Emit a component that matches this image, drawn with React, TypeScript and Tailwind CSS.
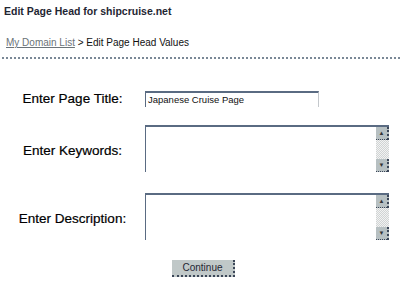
function Scrollbar() {
  return (
    <div className="flex w-[13px] flex-col self-stretch">
      <div className="flex h-[13px] items-center justify-center border-r-2 border-b border-dotted border-[#3b4658] bg-[#b7c0c2] text-[6px] leading-none text-[#333]">
        ▲
      </div>
      <div className="flex-1 bg-[repeating-conic-gradient(#d0d4d4_0_25%,#f2f2f2_0_50%)] bg-[length:2px_2px]" />
      <div className="flex h-[13px] items-center justify-center border-r-2 border-b border-dotted border-[#3b4658] bg-[#b7c0c2] text-[6px] leading-none text-[#333]">
        ▼
      </div>
    </div>
  );
}

function Field({ label, children, h, lift }: { label: string; children: React.ReactNode; h: string; lift?: boolean }) {
  return (
    <div className={`flex items-center ${h}`}>
      <div className={`w-[145px] text-center text-[13.5px] text-black [-webkit-text-stroke:0.2px_black] ${lift ? "pt-[5px]" : ""}`}>
        {label}
      </div>
      {children}
    </div>
  );
}

export default function App() {
  return (
    <div className="h-[286px] w-[400px] overflow-hidden bg-white font-['Liberation_Sans',Arial,sans-serif]">
      <div className="pl-[4px] pt-[4px] text-[10.5px] font-bold leading-[14px] text-[#1f2633]">
        Edit Page Head for shipcruise.net
      </div>
      <div className="pl-[6px] pt-[19px] text-[10px] leading-[12px] text-[#111]">
        <a className="text-[#6b7378] underline">My Domain List</a> &gt; Edit Page Head Values
      </div>
      <div className="mt-[8px] ml-[2px] border-t-2 border-dotted border-[#7a8896]" />

      <div className="mt-[32px] flex flex-col">
        <Field label="Enter Page Title:" h="h-[16px]">
          <div className="flex h-[16px] w-[174px] items-center border-t-2 border-l border-r border-[#5a6b82] border-r-[#c4c8cc] border-r-dotted pl-[2px] text-[9.5px] text-[#111]">
            Japanese Cruise Page
          </div>
        </Field>
        <div className="mt-[18px]">
          <Field label="Enter Keywords:" h="h-[47px]" lift>
            <div className="flex h-[47px] w-[244px] border-t-2 border-l border-[#5a6b82]">
              <div className="flex-1" />
              <Scrollbar />
            </div>
          </Field>
        </div>
        <div className="mt-[21px]">
          <Field label="Enter Description:" h="h-[47px]" lift>
            <div className="flex h-[47px] w-[244px] border-t-2 border-l border-[#5a6b82]">
              <div className="flex-1" />
              <Scrollbar />
            </div>
          </Field>
        </div>
        <div className="mt-[20px] flex pl-[172px]">
          <button className="h-[17px] w-[63px] border-r-2 border-b-2 border-dotted border-[#3b4658] bg-[#c0c8c8] text-[10px] leading-none text-[#1f2633]">
            Continue
          </button>
        </div>
      </div>
    </div>
  );
}
